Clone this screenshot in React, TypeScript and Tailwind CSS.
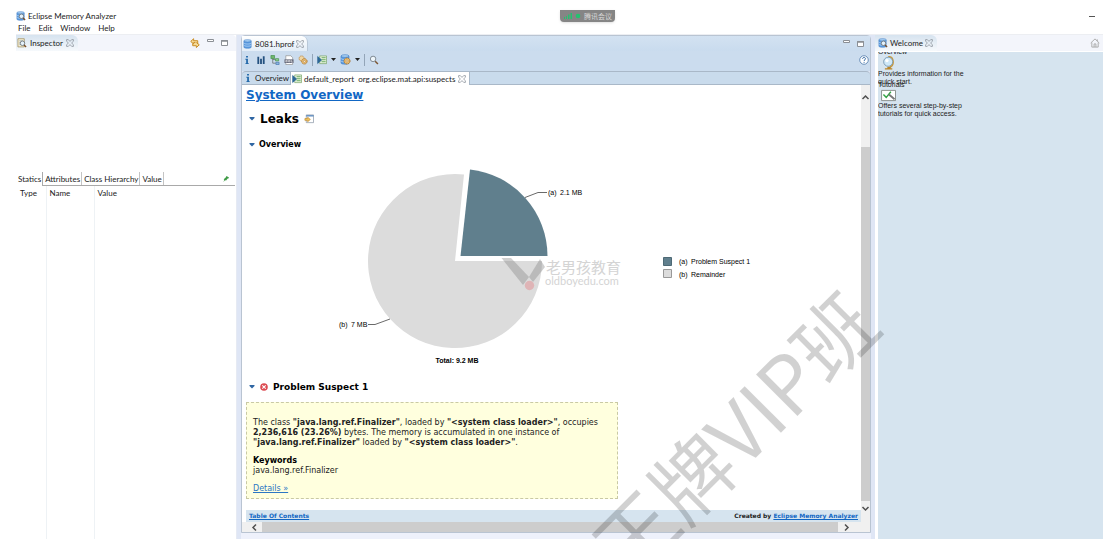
import type { ReactNode } from "react";

const menus = ["File", "Edit", "Window", "Help"];
const inspectorTabs = ["Statics", "Attributes", "Class Hierarchy", "Value"];

function CloseIcon() {
  return (
    <svg width="8" height="8" viewBox="0 0 8 8" fill="none" stroke="#8f969e" strokeWidth="0.8">
      <path d="M.6.6h1.700L4 2.400 5.700.6h1.700v1.700L5.600 4l1.800 1.700v1.700H5.700L4 5.600 2.300 7.400H.6V5.700L2.400 4 .6 2.300z" />
    </svg>
  );
}

function MinMax() {
  return (
    <>
      <button type="button" aria-label="Minimize">
        <svg width="7" height="8" viewBox="0 0 7 8" fill="#fff" stroke="#8b8f95">
          <path d="M.5 .5h6v2h-6z" />
        </svg>
      </button>
      <button type="button" aria-label="Maximize">
        <svg width="7" height="8" viewBox="0 0 7 8" fill="#fff" stroke="#8b8f95">
          <path d="M.5 1.500h6v5h-6z" />
          <path d="M0 2h7" strokeWidth="1.500" />
        </svg>
      </button>
    </>
  );
}

function Glass() {
  return (
    <>
      <circle cx="6" cy="5.800" r="2.500" fill="#e4f1fa" stroke="#6d7780" />
      <path d="M7.800 7.800 10 10" stroke="#7a4f2a" strokeWidth="1.500" />
    </>
  );
}

function Cylinder() {
  return (
    <>
      <path d="M1 2v7c0 1.600 8 1.600 8 0V2z" fill="#5b9be0" stroke="#3f7cc4" strokeWidth=".6" />
      <ellipse cx="5" cy="2" rx="4" ry="1.300" fill="#a8d0f3" stroke="#3f7cc4" strokeWidth=".6" />
      <path d="M1 4.400c0 1.500 8 1.500 8 0M1 6.800c0 1.500 8 1.500 8 0" fill="none" stroke="#c5e0f8" strokeWidth=".7" />
    </>
  );
}

function Icon({ children, size = 10 }: { children: ReactNode; size?: number }) {
  return (
    <svg width={size} height={size} viewBox="0 0 11 11" fill="none" className="shrink-0">
      {children}
    </svg>
  );
}

const MatIcon = () => (
  <Icon>
    <Cylinder />
    <Glass />
  </Icon>
);

const ReportIcon = () => (
  <Icon>
    <path d="M3 1h7.500v8.500H3z" fill="#e9f4df" stroke="#6a9a58" strokeWidth=".7" />
    <path d="M5 3h4.500M5 5.200h4.500M5 7.400h4.500" stroke="#4f9a4a" strokeWidth=".9" />
    <path d="M0 1v9M1 2l4 3.500L1 9z" fill="#2c6796" stroke="#2c6796" strokeWidth=".9" />
  </Icon>
);

const InfoIcon = () => (
  <Icon>
    <path d="M4.500 1h2v1.700h-2zM3.700 4.200h2.800V9h1v1H3.700V9h.9V5.200h-.9z" fill="#1f66a8" />
  </Icon>
);

const Gear = ({ x = 6.5 }: { x?: number }) => (
  <>
    <circle cx={x} cy="7" r="3" fill="#e7bd72" stroke="#a9712c" strokeWidth="1" strokeDasharray="1.500 .6" />
    <circle cx={x} cy="7" r="1" fill="#fff" stroke="#a9712c" strokeWidth=".5" />
  </>
);

const Caret = () => (
  <svg width="5" height="3" viewBox="0 0 5 3" fill="#222">
    <path d="M0 0h5L2.500 3z" />
  </svg>
);

const Twisty = () => (
  <svg width="6" height="4" viewBox="0 0 6 4" fill="#2f66a3" className="shrink-0">
    <path d="M.5 0h5v1L3 3.500 .5 1z" />
  </svg>
);

function Toolbar() {
  return (
    <div className="flex h-5 shrink-0 items-center bg-[#cbdcee] pr-px pb-[3px]">
      <div className="flex items-center gap-1">
        <button type="button" aria-label="Overview">
          <InfoIcon />
        </button>
        <button type="button" aria-label="Histogram">
          <Icon>
            <path d="M2.500 2v8M5.500 4v6M8.500 1.500V10" stroke="#24517f" strokeWidth="2" />
          </Icon>
        </button>
        <button type="button" aria-label="Dominator tree">
          <Icon>
            <path d="M1 .5h4v3.500H1z" fill="#6fb86c" stroke="#3a8a45" strokeWidth=".7" />
            <path d="M3 4v5h3.500M3 5h3" stroke="#555" strokeWidth=".7" />
            <path d="M6 4h3.500v2.500H6z" fill="#8fce8c" stroke="#3a8a45" strokeWidth=".7" />
            <path d="M6.500 8H10v2.500H6.500z" fill="#8fb6e0" stroke="#3f72ad" strokeWidth=".7" />
          </Icon>
        </button>
        <button type="button" aria-label="OQL">
          <Icon>
            <path d="M2 .8h5.500L9.500 3v7.500H2z" fill="#fff" stroke="#888" strokeWidth=".7" />
            <path d="M.5 4.800h10v4H.5z" fill="#696c7c" />
            <path d="M2 6h1.500v1.500H2zM5 6h1.500v1.500H5zM8 5.500v2.300h1.700" stroke="#fff" strokeWidth=".6" />
          </Icon>
        </button>
        <button type="button" aria-label="Thread overview">
          <Icon>
            <circle cx="4" cy="3.800" r="2.800" fill="#efd6a3" stroke="#b98238" strokeWidth=".9" strokeDasharray="1.500 .6" />
            <Gear x={7} />
          </Icon>
        </button>
      </div>
      <span className="mx-1 h-3 w-px bg-[#93a5b8]" />
      <button type="button" aria-label="Run report" className="flex items-center gap-1">
        <ReportIcon />
        <Caret />
      </button>
      <button type="button" aria-label="Query browser" className="ml-1 flex items-center gap-1">
        <Icon size={11}>
          <Cylinder />
          <Gear x={7} />
        </Icon>
        <Caret />
      </button>
      <span className="mx-1 h-3 w-px bg-[#93a5b8]" />
      <button type="button" aria-label="Find">
        <Icon>
          <circle cx="4.500" cy="4.300" r="3" fill="#eef6fb" stroke="#77818a" />
          <path d="m6.800 6.800 3 3" stroke="#7d5632" strokeWidth="1.600" />
        </Icon>
      </button>
      <button type="button" aria-label="Help" className="ml-auto">
        <Icon>
          <circle cx="5.500" cy="5.500" r="4.700" fill="#fff" stroke="#5f87b3" />
          <path d="M3.900 4.200c.1-2 3.300-1.900 3.200 0 0 1-1.500 1.100-1.500 2.300M5.600 7.600v1" stroke="#2f66a3" strokeWidth="1.100" />
        </Icon>
      </button>
    </div>
  );
}

function Inspector() {
  return (
    <section className="flex w-[221px] shrink-0 flex-col border-r border-[#e6eaf3] bg-white">
      <div className="flex h-4 shrink-0 items-center rounded-tr bg-[#f3f5fb] pr-2">
        <div className="flex h-full items-center gap-[3px] rounded-tr-md bg-linear-to-b from-[#d6e3ef] to-[#f6f9fc] pr-1 pl-px">
          <Icon>
            <path d="M1 .8h7v9H1z" fill="#f7efd2" stroke="#9c8a58" strokeWidth=".8" />
            <path d="M2.500 3h4M2.500 5h2M2.500 7h2" stroke="#8ea1b5" strokeWidth=".7" />
            <Glass />
          </Icon>
          <span>Inspector</span>
          <CloseIcon />
        </div>
        <div className="ml-auto flex items-center gap-[7px]">
          <button type="button" aria-label="Link with snapshot">
            <Icon>
              <path d="M8.500 6.500V3H4V.8L.8 3.800 4 6.500V5h2M3 6v2.500h4v2l3.200-3L7 5" fill="#f6dc9a" stroke="#c98d26" strokeWidth="1.100" />
            </Icon>
          </button>
          <MinMax />
        </div>
      </div>
      <div className="h-[121px] shrink-0" />
      <div className="mr-px flex h-[14px] shrink-0 items-stretch border-b border-[#a9a9a9]">
        {inspectorTabs.map((tab, i) => (
          <button
            key={tab}
            type="button"
            className={
              i === 0
                ? "-mb-px border-r border-[#a9a9a9] bg-white pr-px pl-[2px]"
                : "border-r border-[#c4c4c4] pr-px pl-[2px]"
            }
          >
            {tab}
          </button>
        ))}
        <button type="button" aria-label="Pin" className="mr-[5px] ml-auto">
          <svg width="8" height="8" viewBox="0 0 8 8" fill="#3f9b46">
            <path d="m4.500 1 2.500 1.500-.6 1-.7.1-1.600 2-1-.4L1.300 7l1-2-.6-.8 2-1.600z" />
          </svg>
        </button>
      </div>
      <table className="h-full w-full table-fixed text-left">
        <thead>
          <tr className="h-[14px]">
            <th className="w-[30px] pl-1 font-normal">Type</th>
            <th className="w-12 border-l border-[#eef2f5] pl-[3px] font-normal">Name</th>
            <th className="border-l border-[#eef2f5] pl-[3px] font-normal">Value</th>
          </tr>
        </thead>
        <tbody>
          <tr>
            <td />
            <td className="border-l border-[#eef2f5]" />
            <td className="border-l border-[#eef2f5]" />
          </tr>
        </tbody>
      </table>
    </section>
  );
}

function LeakChart() {
  return (
    <svg
      width="510"
      height="216"
      viewBox="246 152 510 216"
      className="mt-px shrink-0 font-['Liberation_Sans',sans-serif] text-[7px]"
    >
      <path d="M455 261H542A87 87 0 1 1 464 174.500z" fill="#dcdcdc" />
      <path d="M460.500 256H547.500A87 87 0 0 0 470 169.500z" fill="#607f8d" />
      <path d="M525 197.500 538 192.500h9M390 319l-15 5.500h-7" fill="none" stroke="#444" strokeWidth=".8" />
      <text x="548" y="195">(a)</text>
      <text x="560" y="195">2.1 MB</text>
      <text x="339" y="327">(b)</text>
      <text x="351" y="327">7 MB</text>
      <text x="457" y="363" textAnchor="middle" fontWeight="bold">Total: 9.2 MB</text>
      <path d="M663.500 257.500h8v8h-8z" fill="#607f8d" stroke="#4d6975" />
      <path d="M663.500 269.500h8v8h-8z" fill="#dcdcdc" stroke="#999" />
      <text x="679" y="264">(a)</text>
      <text x="691" y="264">Problem Suspect 1</text>
      <text x="679" y="277">(b)</text>
      <text x="691" y="277">Remainder</text>
      <g fill="#888" fillOpacity=".4">
        <path d="M501.500 258H511L529 277 523 285z" />
        <path d="M540 259 545 267 533 282 529 277z" />
      </g>
      <circle cx="529.500" cy="285.500" r="4.700" fill="#dfb4b6" />
      <g fill="#d4d4d4" className="font-['Lato','Noto_Sans_CJK_SC',sans-serif]">
        <text x="546" y="273" fontSize="15">老男孩教育</text>
        <text x="545" y="285" fontSize="11">oldboyedu.com</text>
      </g>
    </svg>
  );
}

function Report() {
  return (
    <main className="min-w-0 flex-1 overflow-hidden bg-white pl-1 font-['DejaVu_Sans',Verdana,sans-serif] text-[8px] leading-[10px]">
      <div className="flex flex-col pt-px">
        <h1 className="text-[12px] leading-[18px] font-bold">
          <a href="#overview" className="text-[#1267c4] underline">System Overview</a>
        </h1>
        <h2 className="mt-[7px] flex items-center gap-[5px] pl-[3px] text-[12px] leading-4 font-bold text-black">
          <Twisty />
          Leaks
          <Icon>
            <path d="M2.500 1h8v8.500h-8z" fill="#fff" stroke="#8a96a5" strokeWidth=".8" />
            <path d="M2.500 2h8" stroke="#5b8bbf" strokeWidth="1.500" />
            <path d="M1 5h3V3.500L7 6 4 8.500V7H1z" fill="#f3c55e" stroke="#bd8526" strokeWidth=".7" />
          </Icon>
        </h2>
        <h3 className="mt-3 flex items-center gap-1 pl-[3px] leading-3 font-bold text-black">
          <Twisty />
          Overview
        </h3>
        <LeakChart />
        <h2 className="mt-[11px] flex items-center gap-[5px] pl-[3px] text-[9px] leading-4 font-bold text-black">
          <Twisty />
          <svg width="8" height="8" viewBox="0 0 8 8">
            <circle cx="4" cy="4" r="3.800" fill="#dc4b52" />
            <path d="m2.300 2.300 3.400 3.400m0-3.400L2.300 5.700" stroke="#fff" strokeWidth="1.100" />
          </svg>
          Problem Suspect 1
        </h2>
        <div className="mt-[7px] w-[372px] border border-dashed border-[#c9c9a4] bg-[#ffffde] px-[6px] pt-[15px] pb-1">
          <p>
            The class <b>"java.lang.ref.Finalizer"</b>, loaded by <b>"&lt;system class loader&gt;"</b>, occupies
            <br />
            <b>2,236,616 (23.26%)</b> bytes. The memory is accumulated in one instance of
            <br />
            <b>"java.lang.ref.Finalizer"</b> loaded by <b>"&lt;system class loader&gt;"</b>.
          </p>
          <p className="mt-2 font-bold text-black">Keywords</p>
          <p>java.lang.ref.Finalizer</p>
          <p className="mt-2">
            <a href="#details" className="text-[#2c76c4] underline">Details »</a>
          </p>
        </div>
        <footer className="mt-[11px] flex h-3 items-center justify-between bg-[#d6e4ef] px-[3px] text-[6px] font-bold">
          <a href="#toc" className="text-[#1267c4] underline">Table Of Contents</a>
          <span>
            Created by <a href="#mat" className="text-[#1267c4] underline">Eclipse Memory Analyzer</a>
          </span>
        </footer>
      </div>
    </main>
  );
}

function Chevron({ d }: { d: string }) {
  return (
    <svg width="9" height="9" viewBox="0 0 9 9" fill="none" stroke="#505050" strokeWidth="1.500" className="shrink-0">
      <path d={d} />
    </svg>
  );
}

function Editor() {
  return (
    <section className="ml-1 flex min-w-0 flex-1 flex-col">
      <div className="flex min-h-0 flex-1 flex-col rounded-t border border-[#b9c4d2]">
        <div className="flex h-[15px] shrink-0 items-center bg-linear-to-b from-[#d3e2f1] to-[#c9dbee] pr-[6px]">
          <div className="flex h-full items-center gap-[2px] rounded-tr-md border-r border-[#b9c8d8] bg-linear-to-b from-white to-[#e3edf7] pr-[3px] pl-px">
            <Icon>
              <Cylinder />
            </Icon>
            <span>8081.hprof</span>
            <CloseIcon />
          </div>
          <div className="ml-auto flex items-center gap-[7px]">
            <MinMax />
          </div>
        </div>
        <Toolbar />
        <div className="flex h-[14px] shrink-0 items-stretch rounded-t border-t border-b border-[#a9b8c8] bg-[#c9dbec]">
          <div className="flex items-center gap-[2px] pr-px pl-px">
            <InfoIcon />
            <span>Overview</span>
          </div>
          <div className="-mb-px flex items-center gap-[2px] border-x border-[#a9b8c8] bg-white pr-[3px] pl-px">
            <ReportIcon />
            <span className="whitespace-pre">default_report  org.eclipse.mat.api:suspects</span>
            <span className="ml-px">
              <CloseIcon />
            </span>
          </div>
        </div>
        <div className="flex min-h-0 flex-1">
          <Report />
          <div className="flex w-[9px] shrink-0 flex-col bg-[#f0f0f0]">
            <div className="h-[62px] pt-2">
              <Chevron d="M1.500 6 4.500 3l3 3" />
            </div>
            <div className="flex-1 bg-[#cdcdcd]" />
            <div className="h-[21px] pt-[3px]">
              <Chevron d="m1.500 3 3 3 3-3" />
            </div>
          </div>
        </div>
        <div className="flex h-[10px] shrink-0 items-center bg-[#f0f0f0]">
          <div className="flex w-5 shrink-0 justify-center pl-1">
            <Chevron d="M6 1.500 3 4.500l3 3" />
          </div>
          <div className="h-full flex-1 bg-[#cdcdcd]" />
          <div className="flex w-8 shrink-0 pl-1">
            <Chevron d="m3 1.500 3 3-3 3" />
          </div>
        </div>
      </div>
      <div className="h-[6px] shrink-0 bg-[#eef1fb]" />
    </section>
  );
}

function Welcome() {
  return (
    <aside className="ml-1 flex w-[228px] shrink-0 flex-col bg-white">
      <div className="flex h-4 shrink-0 items-center bg-[#f3f5fb] pr-[3px]">
        <div className="flex h-full items-center gap-[2px] rounded-tr-md bg-linear-to-b from-[#d6e3ef] to-[#f6f9fc] pr-1 pl-[3px]">
          <MatIcon />
          <span>Welcome</span>
          <CloseIcon />
        </div>
        <button type="button" aria-label="Home" className="ml-auto">
          <Icon>
            <path d="M.8 5.500 5.500 1l4.700 4.500M2 5v5h7V5M4.500 10V6.500h2V10M8 1.500v2" stroke="#a8a8a8" />
          </Icon>
        </button>
      </div>
      <div className="mt-px ml-[3px] flex-1 overflow-hidden bg-[#d6e4ef] font-['Liberation_Sans',sans-serif] text-[7px] leading-2">
        <h4 className="-mt-1">Overview</h4>
        <svg width="22" height="14" viewBox="2 0 18 17" fill="none">
          <path d="M10 .8c7 0 8 10 2 13" stroke="#c89a3f" strokeWidth="2" />
          <path d="M9 13h4v2h2v1.500H6V15h3z" fill="#b98529" />
          <circle cx="10" cy="7" r="5.500" fill="#cfe8f8" stroke="#7193ac" />
          <circle cx="8.500" cy="5.500" r="2" fill="#fff" />
        </svg>
        <p>
          Provides information for the
          <br />
          quick start.
        </p>
        <h4 className="-mt-[5px]">Tutorials</h4>
        <svg width="22" height="13" viewBox="0 0 22 14" fill="none">
          <path d="M3 1.500h15v11H3z" fill="#fff" stroke="#858c88" />
          <path d="m5 6 3 3 5-6" stroke="#33a447" strokeWidth="1.500" />
          <path d="m11 6 6 5" stroke="#777" strokeWidth="2" />
        </svg>
        <p>
          Offers several step-by-step
          <br />
          tutorials for quick access.
        </p>
      </div>
    </aside>
  );
}

export default function App() {
  return (
    <div className="relative flex h-screen flex-col overflow-hidden bg-white pl-4 font-['Lato','Noto_Sans_CJK_SC',sans-serif] text-[8px] leading-3 text-[#222]">
      <header className="shrink-0 pt-[10px]">
        <div className="flex h-3 items-center gap-[2px] pr-2">
          <MatIcon />
          <span>Eclipse Memory Analyzer</span>
          <button type="button" aria-label="Minimize window" className="ml-auto h-px w-[6px] bg-[#555]" />
        </div>
        <nav className="flex h-3 items-center gap-2 pl-[2px]">
          {menus.map((item) => (
            <button key={item} type="button">
              {item}
            </button>
          ))}
        </nav>
      </header>

      <div className="flex min-h-0 flex-1 border-t border-[#eceef2] bg-[#dfe6f5]">
        <Inspector />
        <Editor />
        <Welcome />
      </div>

      <div className="absolute top-[10px] left-[560px] flex h-3 items-center gap-px rounded-b-sm bg-[#858585] px-[3px] text-[7px] text-[#d8d8d8] shadow">
        <svg width="20" height="8" viewBox="0 0 20 8" fill="#25c16f">
          <path d="M1 5h1v2H1zM3 4h1v3H3zM5 2.500h1.500V7H5zM7.500 1H9v6H7.500z" />
          <circle cx="15" cy="4" r="2.300" />
        </svg>
        腾讯会议
      </div>

      <div className="pointer-events-none absolute top-[392px] left-[552px] -rotate-45 font-['Noto_Sans_CJK_SC',sans-serif] text-[80px] leading-[80px] whitespace-nowrap text-black/18">
        王牌VIP班
      </div>
    </div>
  );
}
